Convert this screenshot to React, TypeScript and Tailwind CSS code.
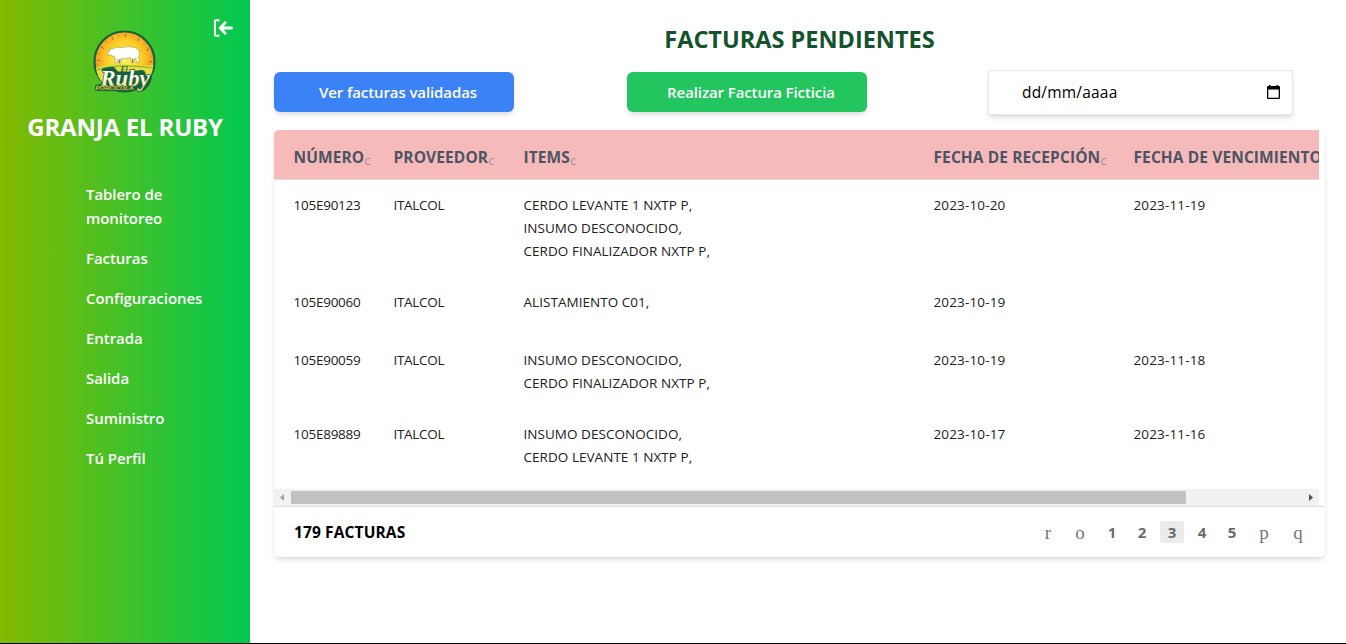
import type { ReactNode } from "react";

const navItems = ["Facturas", "Configuraciones", "Entrada", "Salida", "Suministro", "Tú Perfil"];

const columns = "grid grid-cols-[100px_130px_410px_200px_260px] pl-[19.5px] pr-5 w-[1220px]";

const rows = [
  { id: "105E90123", items: ["CERDO LEVANTE 1 NXTP P,", "INSUMO DESCONOCIDO,", "CERDO FINALIZADOR NXTP P,"], received: "2023-10-20", due: "2023-11-19", height: "h-[97px]" },
  { id: "105E90060", items: ["ALISTAMIENTO C01,"], received: "2023-10-19", due: "", height: "h-[58px]" },
  { id: "105E90059", items: ["INSUMO DESCONOCIDO,", "CERDO FINALIZADOR NXTP P,"], received: "2023-10-19", due: "2023-11-18", height: "h-[74px]" },
  { id: "105E89889", items: ["INSUMO DESCONOCIDO,", "CERDO LEVANTE 1 NXTP P,"], received: "2023-10-17", due: "2023-11-16", height: "h-[74px]" },
];

function Logo() {
  return (
    <svg className="h-[68px] w-[68px]" viewBox="0 0 68 68">
      <defs>
        <radialGradient id="sun" cx="50%" cy="45%" r="55%">
          <stop offset="0" stopColor="#fff36a" />
          <stop offset="0.5" stopColor="#fdd228" />
          <stop offset="1" stopColor="#f08c1e" />
        </radialGradient>
        <linearGradient id="letters" x1="0" y1="0" x2="0" y2="1">
          <stop offset="0.35" stopColor="#ffffff" />
          <stop offset="1" stopColor="#f5dd84" />
        </linearGradient>
      </defs>
      <circle cx="33.500" cy="34.500" r="30" fill="url(#sun)" stroke="#17613f" strokeWidth="2.2" />
      <circle cx="33.500" cy="34.500" r="26" fill="none" stroke="#8a5a1c" strokeWidth="3" strokeDasharray="0.8 12.814" />
      <circle cx="33.500" cy="34.500" r="26.500" fill="none" stroke="#b97a22" strokeWidth="1.5" strokeDasharray="0.6 6.338" />
      <path d="M5 41Q18 35 34 37.500T62.500 38Q61 50 54 56L12 56Q6 50 5 41Z" fill="#e6dc42" />
      <path d="M5.500 43Q26 36 62 41" stroke="#8fb52c" strokeWidth="1.200" fill="none" />
      <path d="M17 25.500Q18 23.500 19.500 23L19.500 21L22 21.800Q25 19.500 30 20.500Q38 19 44 20.500Q48.500 22 48.500 27L47.500 30L48.500 35.500L46 35.500L44.500 31L42.500 32.500L43 35.500L40.500 35.500L39.500 30.500Q35 32.500 30.500 31.500L30 36L27.800 36L27 32L26.500 36L24.300 36L24 30Q21.500 29.500 20.500 28.500L17.500 28.300Z" fill="#fff" stroke="#6d7a2c" strokeWidth="0.4" />
      <path d="M28.500 36L29 32M41.500 35.500L41.500 32" stroke="#27583a" strokeWidth="0.8" />
      <path d="M10 43Q13 39.500 23 40L27 44.500L36 45L50 43Q55 43 54.500 48L61 49Q61 56 54.500 62.500Q50 66 45.500 62L42 63Q20 65 4.500 63.500L4 58.500L12 56L16 47Z" fill="#17613f" />
      <text x="29.500" y="45" fontSize="7.500" className="font-['Liberation_Serif',serif] font-bold italic" fill="#17613f">El</text>
      <text x="9.500" y="58.500" fontSize="24" textLength="49" lengthAdjust="spacingAndGlyphs" className="font-['Liberation_Serif',serif] font-bold italic" fill="url(#letters)" stroke="#17613f" strokeWidth="1.500" paintOrder="stroke">Ruby</text>
      <text x="4.500" y="63.200" fontSize="5.800" textLength="38" lengthAdjust="spacingAndGlyphs" className="font-['Liberation_Sans',sans-serif] font-bold italic" fill="#e9c32d" stroke="#17613f" strokeWidth="1.200" paintOrder="stroke">PORCICOLA</text>
    </svg>
  );
}

function HeaderCell({ children }: { children: ReactNode }) {
  return (
    <div className="flex items-baseline whitespace-nowrap">
      <span>{children}</span>
      <span className="relative top-[2px] text-[13px] font-normal leading-none text-[#b08c92]">c</span>
    </div>
  );
}

function Sidebar() {
  return (
    <aside className="flex w-[250px] shrink-0 flex-col bg-[linear-gradient(to_right,#84b900,#00c951)] text-white">
      <div className="flex h-[27px] justify-end pr-[17px] pt-[19px]">
        <svg className="h-[18px] w-5 shrink-0" viewBox="0 0 20 18" fill="none" stroke="white">
          <path d="M6.500 1.200H3Q2 1.200 2 2.200V15.800Q2 16.800 3 16.800H6.500" strokeWidth="2" />
          <path d="M18.500 9H8M12.200 3.800L7.200 9l5 5.200" strokeWidth="2.800" strokeLinecap="round" strokeLinejoin="round" />
        </svg>
      </div>
      <div className="flex h-[68px] justify-center">
        <Logo />
      </div>
      <h2 className="mt-4 whitespace-nowrap text-center text-[24px] font-bold leading-8 tracking-[-0.2px]">GRANJA EL RUBY</h2>
      <nav className="mt-[39px] flex flex-col gap-4 pl-[86px] text-[15px] font-semibold leading-6 tracking-[-0.05px]">
        <a>Tablero de<br />monitoreo</a>
        {navItems.map((item) => (
          <a key={item}>{item}</a>
        ))}
      </nav>
    </aside>
  );
}

function DateField() {
  return (
    <div className="flex h-[45px] w-[305px] items-center justify-between border border-[#e5e7eb] bg-white pl-[33px] pr-[12px] shadow-md">
      <span className="text-[15.5px] tracking-[0.2px] text-black">dd/mm/aaaa</span>
      <svg className="mb-0.5 h-[14px] w-[13px]" viewBox="0 0 13 14">
        <path fillRule="evenodd" d="M2 0h1.500v1h6V0H11v1h1q1 0 1 1v11q0 1-1 1H1q-1 0-1-1V2q0-1 1-1h1zM1.300 4.500v8.200h10.400V4.500z" />
      </svg>
    </div>
  );
}

const arrowClass = "w-8 pt-0.5 text-center font-['Liberation_Serif',serif] text-[19px] font-normal text-[#757575]";

function Pagination() {
  return (
    <div className="flex items-center text-[15px] font-bold text-[#6b6b6b]">
      <span className={arrowClass}>r</span>
      <span className={arrowClass}>o</span>
      <span className="ml-1 w-6 text-center">1</span>
      <span className="ml-1.5 w-6 text-center">2</span>
      <span className="ml-1.5 h-[22px] w-6 rounded-[3px] bg-[#ebebeb] text-center leading-[22px]">3</span>
      <span className="ml-1.5 w-6 text-center">4</span>
      <span className="ml-1.5 w-6 text-center">5</span>
      <span className={`ml-1 ${arrowClass}`}>p</span>
      <span className={`ml-[2px] ${arrowClass}`}>q</span>
    </div>
  );
}

export default function App() {
  return (
    <div className="flex h-[644px] w-[1346px] overflow-hidden border-b border-black bg-white font-['Open_Sans','Noto_Sans',sans-serif]">
      <Sidebar />
      <main className="flex min-w-0 flex-1 flex-col pl-6 pr-[21px] pt-[23px]">
        <h1 className="text-center text-[23.5px] font-bold leading-8 text-[#14532d]">FACTURAS PENDIENTES</h1>
        <div className="mt-[15px] flex h-[45px] text-[15px] font-semibold tracking-[-0.1px] text-white">
          <button className="mt-[2px] h-10 w-60 rounded-md bg-[#3b82f6] pl-2 shadow-md">Ver facturas validadas</button>
          <button className="ml-[113px] mt-[2px] h-10 w-60 rounded-md bg-[#22c55e] pl-2 shadow-md">Realizar Factura Ficticia</button>
          <div className="ml-[121px] font-normal"><DateField /></div>
        </div>
        <section className="mt-[15px] flex h-[427px] w-[1051px] flex-col rounded-[5px] bg-white shadow-md">
          <div className="flex h-[359px] w-[1045px] flex-col overflow-hidden rounded-tl-[5px]">
            <div className={`${columns} h-[50px] shrink-0 items-center border-b border-[#dfdfdf] bg-[#f7baba] pt-1.5 text-[15.5px] font-bold tracking-[0.1px] text-[#4b5563]`}>
              <HeaderCell>NÚMERO</HeaderCell>
              <HeaderCell>PROVEEDOR</HeaderCell>
              <HeaderCell>ITEMS</HeaderCell>
              <HeaderCell>FECHA DE RECEPCIÓN</HeaderCell>
              <HeaderCell>FECHA DE VENCIMIENTO</HeaderCell>
            </div>
            {rows.map((row) => (
              <div key={row.id} className={`${columns} ${row.height} shrink-0 pt-[14px] text-[13.5px] leading-[23px] text-[#212121]`}>
                <span className="tracking-[-0.25px]">{row.id}</span>
                <span className="tracking-[-0.3px]">ITALCOL</span>
                <div className="tracking-[0.04px]">{row.items.map((item) => <p key={item}>{item}</p>)}</div>
                <span className="tracking-[0.15px]">{row.received}</span>
                <span className="tracking-[0.15px]">{row.due}</span>
              </div>
            ))}
          </div>
          <div className="flex h-[17px] w-[1045px] items-center justify-between bg-[#f1f1f1]">
            <svg className="h-[17px] w-[17px]" viewBox="0 0 17 17"><path d="M10 5v7L6 8.500z" fill="#a3a3a3" /></svg>
            <div className="h-[13px] w-[895px] bg-[#c1c1c1]" />
            <div className="flex-1" />
            <svg className="h-[17px] w-[17px]" viewBox="0 0 17 17"><path d="M7 5v7l4-3.500z" fill="#505050" /></svg>
          </div>
          <footer className="flex flex-1 items-center justify-between border-t border-[#dfdfdf] pl-5 pr-[11px]">
            <span className="pt-0.5 text-[15.5px] font-bold tracking-[0.12px] text-black">179 FACTURAS</span>
            <Pagination />
          </footer>
        </section>
      </main>
    </div>
  );
}
